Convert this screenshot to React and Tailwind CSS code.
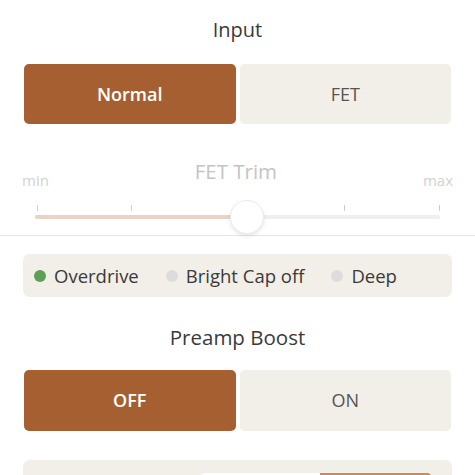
export default function App() {
  const font = { fontFamily: '"Open Sans", "Noto Sans", sans-serif' };
  return (
    <div className="w-[475px] h-[475px] overflow-hidden bg-white text-[#3a3a3a]" style={font}>
      <div className="px-6">
        <div className="pt-4 h-[44px] text-center text-[20px] leading-[28px] text-[#3a3a3a]">Input</div>
        <div className="mt-5 grid grid-cols-2 gap-[4px] h-[60px]">
          <div className="rounded-[5px] bg-[#a65f30] text-white font-semibold text-[18px] flex items-center justify-center">Normal</div>
          <div className="rounded-[5px] bg-[#f2eee8] text-[#555] text-[18px] flex items-center justify-center">FET</div>
        </div>
      </div>

      <div className="mt-[33px] h-[79px] border-b border-[#e6e6e6] px-[22px]">
        <div className="flex items-start justify-between">
          <span className="mt-[13px] text-[15px] leading-[20px] text-[#d2d2d2]">min</span>
          <span className="text-[20.5px] leading-[28px] text-[#c4c4c4]">FET Trim</span>
          <span className="mt-[13px] text-[15px] leading-[20px] text-[#d2d2d2]">max</span>
        </div>
        <div className="relative mx-[13px] mt-[15px] h-[40px]">
          <div className="absolute left-[2px] top-0 w-px h-[6px] bg-[#cfcfcf]"></div>
          <div className="absolute left-[96px] top-0 w-px h-[6px] bg-[#cfcfcf]"></div>
          <div className="absolute left-[309px] top-0 w-px h-[6px] bg-[#cfcfcf]"></div>
          <div className="absolute left-[404px] top-0 w-px h-[6px] bg-[#cfcfcf]"></div>
          <div className="absolute left-0 right-0 top-[10px] h-[4px] rounded-full bg-[#efefef]"></div>
          <div className="absolute left-0 w-[200px] top-[10px] h-[4px] rounded-full bg-[#e8d3c4]"></div>
          <div className="absolute left-[195px] top-[-5px] w-[34px] h-[34px] rounded-full bg-white border border-[#ececec] shadow-[0_2px_4px_rgba(0,0,0,0.10)]"></div>
        </div>
      </div>

      <div className="px-[23px]">
        <div className="mt-[18px] h-[43px] rounded-[7px] bg-[#f2eee8] flex items-center pl-[11px] text-[18.5px] leading-[24px] text-[#3a3a3a]">
          <span className="w-[12px] h-[12px] shrink-0 rounded-full bg-[#5e9e58]"></span>
          <span className="ml-[8px]">Overdrive</span>
          <span className="ml-[27px] w-[12px] h-[12px] shrink-0 rounded-full bg-[#dcdcdc]"></span>
          <span className="ml-[8px]">Bright Cap off</span>
          <span className="ml-[27px] w-[12px] h-[12px] shrink-0 rounded-full bg-[#dcdcdc]"></span>
          <span className="ml-[8px]">Deep</span>
        </div>
      </div>

      <div className="px-6">
        <div className="mt-[26px] text-center text-[20.5px] leading-[28px] text-[#3a3a3a]">Preamp Boost</div>
        <div className="mt-[19px] grid grid-cols-2 gap-[4px] h-[61px]">
          <div className="rounded-[5px] bg-[#a65f30] text-white font-semibold text-[18px] flex items-center justify-center">OFF</div>
          <div className="rounded-[5px] bg-[#f2eee8] text-[#555] text-[18px] flex items-center justify-center">ON</div>
        </div>
      </div>

      <div className="px-[23px]">
        <div className="mt-[29px] h-[60px] rounded-[7px] bg-[#f2eee8] pt-[13px] pr-[20px] flex justify-end">
          <div className="flex h-[40px]">
            <div className="w-[120px] rounded-l-[5px] bg-white"></div>
            <div className="w-[112px] rounded-r-[5px] bg-[#c98a5e]"></div>
          </div>
        </div>
      </div>
    </div>
  );
}
